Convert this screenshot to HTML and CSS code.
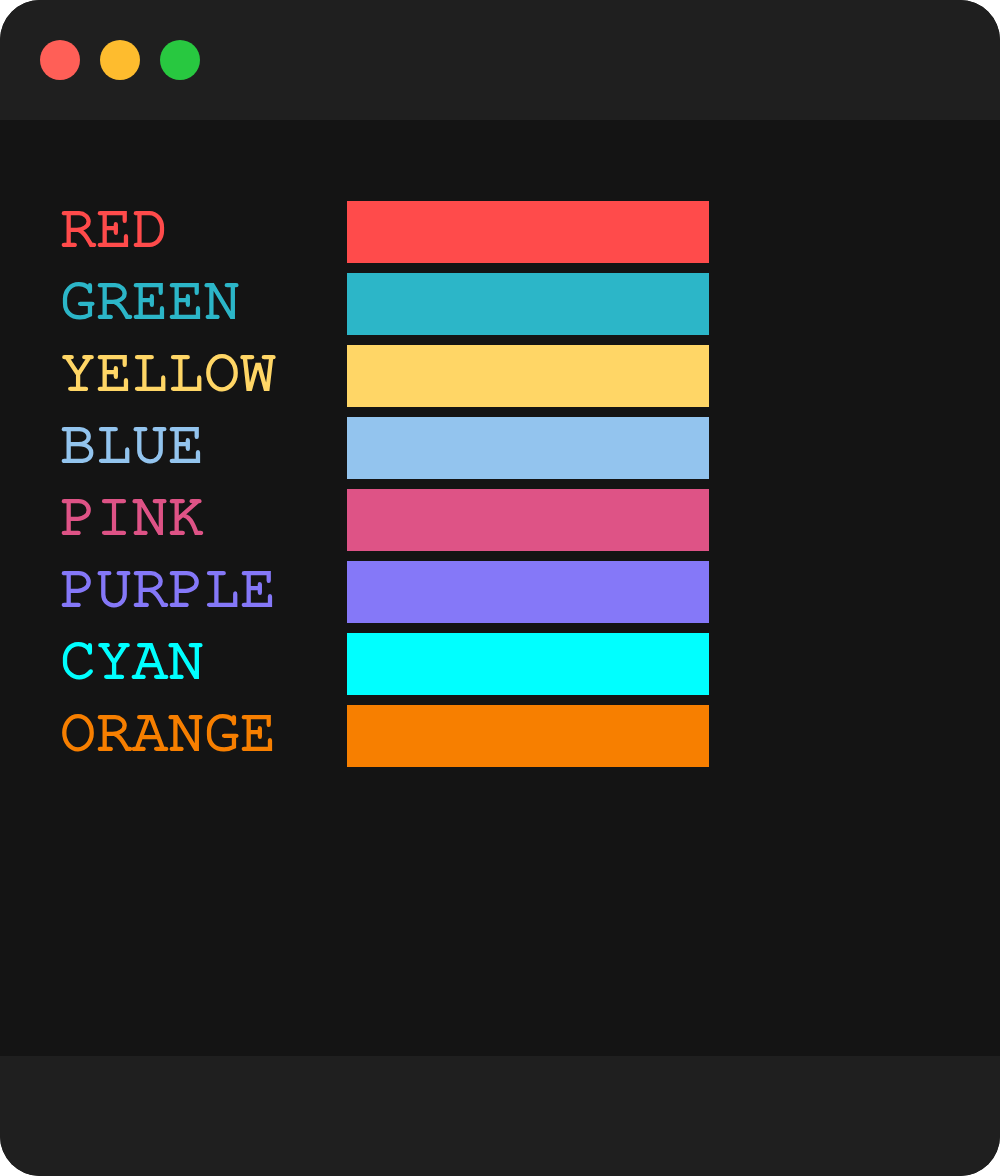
FILE: index.html
```html
<!DOCTYPE html>
<html>
<head>
<meta charset="utf-8">
<link rel="stylesheet" href="styles.css">
</head>
<body>
<div class="window">
  <div class="titlebar">
    <span class="dot dot-red"></span>
    <span class="dot dot-yellow"></span>
    <span class="dot dot-green"></span>
  </div>
  <div class="content">
    <div class="palette">
      <div class="label c-red">RED</div><div class="bar b-red"></div>
      <div class="label c-green">GREEN</div><div class="bar b-green"></div>
      <div class="label c-yellow">YELLOW</div><div class="bar b-yellow"></div>
      <div class="label c-blue">BLUE</div><div class="bar b-blue"></div>
      <div class="label c-pink">PINK</div><div class="bar b-pink"></div>
      <div class="label c-purple">PURPLE</div><div class="bar b-purple"></div>
      <div class="label c-cyan">CYAN</div><div class="bar b-cyan"></div>
      <div class="label c-orange">ORANGE</div><div class="bar b-orange"></div>
    </div>
  </div>
  <div class="footer"></div>
</div>
</body>
</html>
```
FILE: styles.css
```css
html, body {
  margin: 0;
  padding: 0;
  background: #ffffff;
}
.window {
  width: 1000px;
  height: 1176px;
  border-radius: 40px;
  overflow: hidden;
  display: flex;
  flex-direction: column;
  background: #141414;
}
.titlebar {
  height: 120px;
  background: #1f1f1f;
  display: flex;
  align-items: center;
  gap: 20px;
  padding-left: 40px;
  flex: none;
}
.dot {
  width: 40px;
  height: 40px;
  border-radius: 50%;
  display: block;
}
.dot-red { background: #ff5f57; }
.dot-yellow { background: #febc2e; }
.dot-green { background: #28c840; }
.content {
  flex: 1;
  background: #141414;
  padding: 81px 0 0 60px;
}
.footer {
  height: 120px;
  background: #1f1f1f;
  flex: none;
}
.palette {
  display: grid;
  grid-template-columns: 287px 362px;
  grid-auto-rows: 62px;
  row-gap: 10px;
}
.label {
  font-family: "Nimbus Mono PS", "Nimbus Mono L", "Nimbus Mono", "FreeMono", "Courier 10 Pitch", "Courier", "Liberation Mono", monospace;
  font-size: 60px;
  line-height: 54px;
  white-space: nowrap;
  -webkit-text-stroke: 1.8px currentColor;
}
.bar { height: 62px; }
.c-red { color: #ff4b4b; }
.c-green { color: #2cb6c8; }
.c-yellow { color: #ffd666; }
.c-blue { color: #93c4ee; }
.c-pink { color: #de5386; }
.c-purple { color: #8578f8; }
.c-cyan { color: #00ffff; }
.c-orange { color: #f77f00; }
.b-red { background: #ff4b4b; }
.b-green { background: #2cb6c8; }
.b-yellow { background: #ffd666; }
.b-blue { background: #93c4ee; }
.b-pink { background: #de5386; }
.b-purple { background: #8578f8; }
.b-cyan { background: #00ffff; }
.b-orange { background: #f77f00; }
```
